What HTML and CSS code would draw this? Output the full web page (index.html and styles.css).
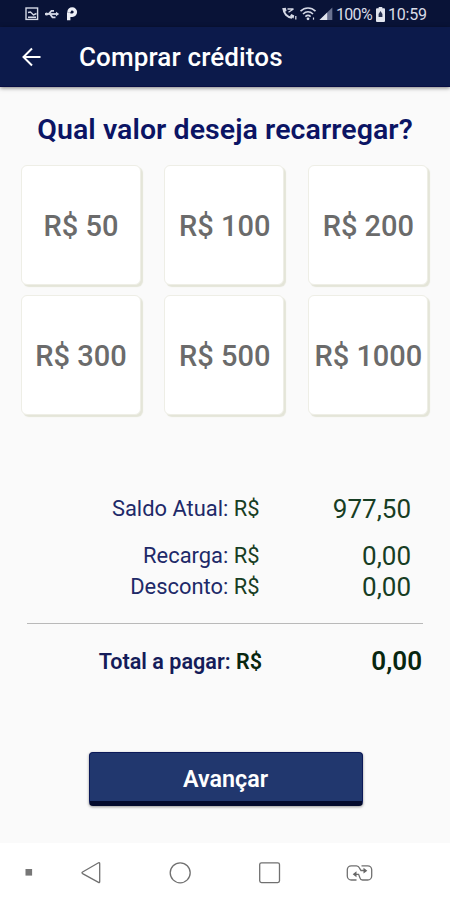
FILE: index.html
```html
<!DOCTYPE html>
<html lang="pt-BR">
<head>
<meta charset="utf-8">
<title>Comprar créditos</title>
<link rel="stylesheet" href="styles.css">
</head>
<body>
<div class="status">
  <svg class="status-left" width="56" height="16" viewBox="24 6 56 16" fill="none" stroke="#d5d9e6" stroke-width="1.4">
    <rect x="26" y="8" width="11.6" height="11.4"/>
    <path d="M28 12.5l2.5-.5 3 3 3-1.5M28 17.3h8"/>
    <path d="M45 14h13" stroke-width="1.8"/>
    <path d="M48.5 14l3-3.2h2.5M50 14l2.5 3.3h3" stroke-width="1.8"/>
    <path d="M56 11.8l3.2 2.2-3.2 2.2z" fill="#d5d9e6" stroke="none"/>
    <circle cx="46.6" cy="14" r="1.6" fill="#d5d9e6" stroke="none"/>
    <path d="M68.7 20.2v-8M69 12a3.2 3.2 0 1 1 3.3 3.3h-2.5" stroke-width="3.4" stroke="#eef0f7"/>
  </svg>
  <div class="status-right">
    <svg width="52" height="16" viewBox="281 6 52 16" fill="none" stroke="#d5d9e6" stroke-width="1.4">
      <path d="M283.5 8.5c.3 5 3.5 8.7 8.7 9.2" stroke-width="2.2"/>
      <path d="M282.2 8.3l3.6-.6.8 3.2-2.2 1.2zM290 16l1.3-2 3 1.6-.8 2.8z" fill="#d5d9e6" stroke="none"/>
      <path d="M287.5 9h6M288.5 12.3l5-3.3M295.8 16v3.6" stroke-width="1.3"/>
      <path d="M300.5 11.2c4.5-4.2 10.5-4.2 15 0M303 14c3-2.8 7-2.8 10 0M305.4 16.6c1.6-1.5 3.6-1.5 5.2 0" stroke-width="1.6"/>
      <circle cx="308" cy="18.8" r="1.4" fill="#d5d9e6" stroke="none"/>
      <path d="M313.5 17.5v2.2" stroke-width="1.2"/>
      <path d="M332.3 7.6v12.3H319.5z" fill="#6a7290" stroke="none"/>
      <path d="M327.2 12.5v7.4h-7.7z" fill="#e2e5ee" stroke="none"/>
    </svg>
    <span class="battery-text">100%</span>
    <svg class="battery" width="9" height="15" viewBox="0 0 9 15"><path d="M2.7 0h3.6v1.3H8a1 1 0 0 1 1 1V14a1 1 0 0 1-1 1H1a1 1 0 0 1-1-1V2.3a1 1 0 0 1 1-1h1.7z" fill="#e2e5ee"/><path d="M4.5 4L2.6 7v3h3.8V7z" fill="#27304f"/></svg>
    <span class="clock">10:59</span>
  </div>
</div>
<header class="appbar">
  <svg width="20" height="20" viewBox="0 0 20 20" fill="none" stroke="#fff" stroke-width="2"><path d="M18.5 10H2M10 1.5L1.5 10l8.5 8.5"/></svg>
  <h1>Comprar créditos</h1>
</header>
<main>
  <h2>Qual valor deseja recarregar?</h2>
  <div class="values">
    <button>R$ 50</button><button>R$ 100</button><button>R$ 200</button>
    <button>R$ 300</button><button>R$ 500</button><button>R$ 1000</button>
  </div>
  <div class="summary">
    <div class="row balance"><span class="label">Saldo Atual: <b>R$</b></span><span class="amount">977,50</span></div>
    <div class="row"><span class="label">Recarga: <b>R$</b></span><span class="amount">0,00</span></div>
    <div class="row"><span class="label">Desconto: <b>R$</b></span><span class="amount">0,00</span></div>
  </div>
  <div class="total"><span class="label">Total a pagar: <b>R$</b></span><span class="amount">0,00</span></div>
  <button class="next">Avançar</button>
</main>
<nav>
  <svg width="450" height="57" viewBox="0 843 450 57" fill="none" stroke="#707070" stroke-width="1.3">
    <rect x="25.5" y="869" width="6.6" height="6.6" fill="#777" stroke="none"/>
    <path d="M98.5 862.8q1.2-.5 1.2 1v17.6q0 1.5-1.2 1L82.6 873.6q-1.2-.9 0-1.6z"/>
    <circle cx="180.2" cy="872.8" r="10"/>
    <rect x="259.7" y="862.8" width="19.8" height="19.8" rx="1.8"/>
    <path d="M356.5 880h-5.2a4 4 0 0 1-4-4v-6.2a4 4 0 0 1 4-4h5.2q2 0 3 2.3l1.5 2.4h4.5M361.5 865.8h6.2a4 4 0 0 1 4 4v6.2a4 4 0 0 1-4 4h-5.2q-2 0-2.6-2.2l-1.3-3.5h-4.5"/>
    <path d="M363.5 867.8l3.8 2.9-3.8 2.9zM356.5 871.3l-3.8 3 3.8 3z" fill="#666" stroke="none"/>
  </svg>
</nav>
</body>
</html>
```
FILE: styles.css
```css
* { box-sizing: border-box; }
body {
  margin: 0;
  width: 450px;
  height: 900px;
  display: flex;
  flex-direction: column;
  overflow: hidden;
  background: #fafafa;
  font-family: Roboto, sans-serif;
}
h1, h2 { margin: 0; font-weight: 500; white-space: nowrap; }
b { font-weight: inherit; }
.status {
  height: 27px;
  flex: none;
  padding: 1px 22px 0 24px;
  display: flex;
  align-items: center;
  justify-content: space-between;
  background: #091337;
  color: #d9dce7;
  font-size: 16px;
}
.status-right { display: flex; align-items: center; }
.battery-text { margin-left: 3px; width: 36px; letter-spacing: -0.7px; }
.battery { margin-left: 4px; }
.clock { margin-left: 3px; width: 40px; letter-spacing: -0.2px; }
.appbar {
  height: 60px;
  flex: none;
  padding-left: 22px;
  display: flex;
  align-items: center;
  gap: 37px;
  background: #0c1a4b;
  border-bottom: 1px solid #080d42;
  box-shadow: 0 1px 4px rgba(0, 0, 0, .5);
  color: #fff;
}
h1 { font-size: 26px; letter-spacing: 0.13px; }
main { flex: 1; display: flex; flex-direction: column; }
h2 {
  margin-top: 26px;
  line-height: 34px;
  text-align: center;
  font-size: 28.5px;
  font-weight: 600;
  letter-spacing: 0.07px;
  color: #0b1464;
}
.values {
  margin: 18px 0 0 20.5px;
  display: grid;
  grid-template-columns: repeat(3, 120px);
  grid-auto-rows: 120px;
  gap: 10px 23.7px;
}
button { font-family: inherit; white-space: nowrap; }
.values button {
  padding: 1px 0 0 1px;
  border: 1px solid #eeeee6;
  border-radius: 6px;
  background: #fff;
  box-shadow: 2px 2px 1px #e4e5d8;
  color: #6b6b6b;
  font-size: 29px;
  font-weight: 500;
}
.summary { margin: 78px 39px 0 27px; }
.row, .total { display: flex; justify-content: space-between; align-items: center; }
.row { height: 31px; }
.balance { margin-bottom: 16px; }
.label { width: 232.5px; text-align: right; font-size: 21.9px; color: #202968; white-space: nowrap; }
.label b { color: #173d23; }
.amount { font-size: 26px; color: #173d23; }
.total {
  margin: 21px 27px 0;
  height: 75px;
  border-top: 1px solid #b9b9b9;
  font-weight: 600;
}
.total .label { width: 235px; font-size: 21.6px; color: #141c59; }
.total .amount { margin-right: 1px; }
.total .label b, .total .amount { color: #08260f; }
.next {
  width: 274px;
  height: 54px;
  margin: 54px 0 0 88.5px;
  padding: 4px 0 0;
  border: 1px solid #0b1958;
  border-bottom: 5px solid #030a2c;
  border-radius: 4px;
  background: #21376e;
  box-shadow: 0 1px 3px rgba(0, 0, 0, .4);
  color: #fff;
  font-size: 23.3px;
  font-weight: 600;
}
nav { flex: none; height: 57px; background: #fff; }
nav svg { display: block; }
```
